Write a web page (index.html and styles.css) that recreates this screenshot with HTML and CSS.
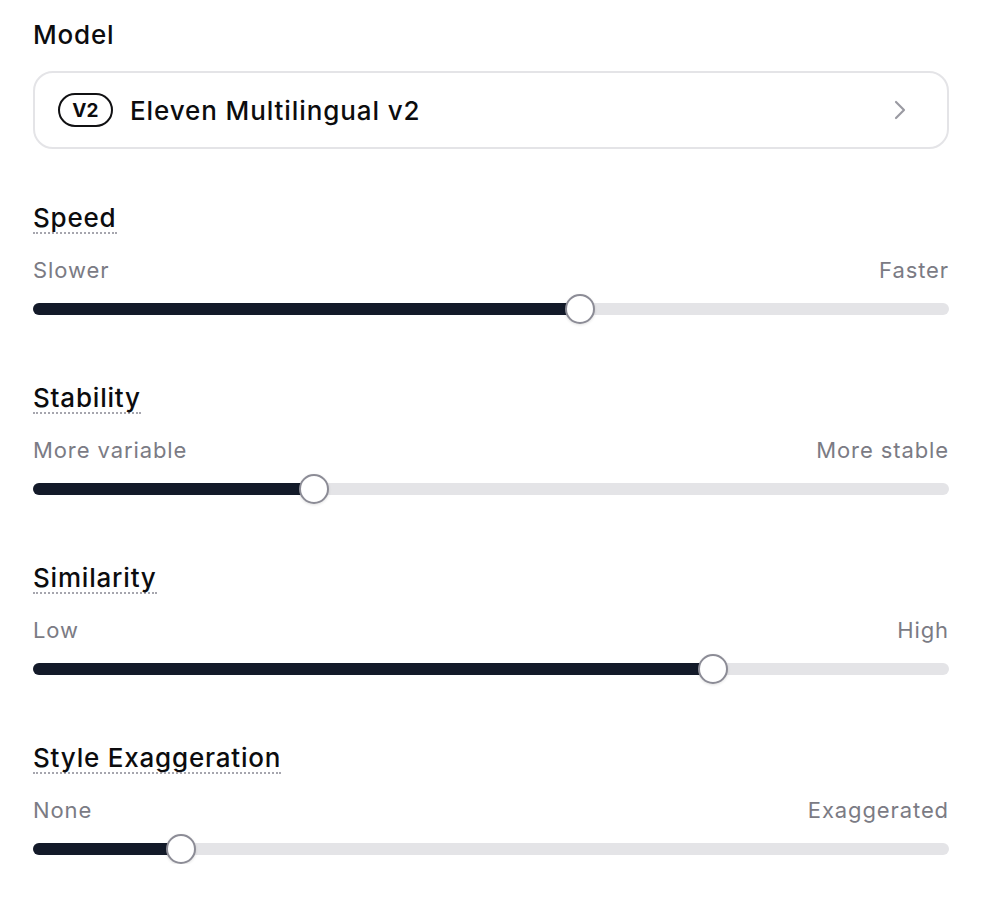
FILE: index.html
```html
<!DOCTYPE html>
<html lang="en">
<head>
<meta charset="utf-8">
<title>Voice settings</title>
<link rel="stylesheet" href="styles.css">
</head>
<body>
<main class="panel">
  <div class="field-title">Model</div>
  <button class="model-select" type="button">
    <span class="badge">V2</span>
    <span class="model-name">Eleven Multilingual v2</span>
    <svg class="chevron" viewBox="0 0 24 24" width="32" height="32" fill="none" stroke="currentColor" stroke-width="1.6" stroke-linecap="round" stroke-linejoin="round"><path d="m9 18 6-6-6-6"/></svg>
  </button>

  <section class="setting">
    <div class="label-row"><span class="label">Speed</span></div>
    <div class="ends"><span>Slower</span><span>Faster</span></div>
    <div class="slider"><div class="track"><div class="fill" style="width:calc(15px + (100% - 30px) * 0.60)"></div><div class="thumb" style="left:calc((100% - 30px) * 0.60)"></div></div></div>
  </section>

  <section class="setting">
    <div class="label-row"><span class="label">Stability</span></div>
    <div class="ends"><span>More variable</span><span>More stable</span></div>
    <div class="slider"><div class="track"><div class="fill" style="width:calc(15px + (100% - 30px) * 0.30)"></div><div class="thumb" style="left:calc((100% - 30px) * 0.30)"></div></div></div>
  </section>

  <section class="setting">
    <div class="label-row"><span class="label">Similarity</span></div>
    <div class="ends"><span>Low</span><span>High</span></div>
    <div class="slider"><div class="track"><div class="fill" style="width:calc(15px + (100% - 30px) * 0.75)"></div><div class="thumb" style="left:calc((100% - 30px) * 0.75)"></div></div></div>
  </section>

  <section class="setting">
    <div class="label-row"><span class="label">Style Exaggeration</span></div>
    <div class="ends"><span>None</span><span>Exaggerated</span></div>
    <div class="slider"><div class="track"><div class="fill" style="width:calc(15px + (100% - 30px) * 0.15)"></div><div class="thumb" style="left:calc((100% - 30px) * 0.15)"></div></div></div>
  </section>
</main>
</body>
</html>
```

FILE: styles.css
```css
html, body {
  margin: 0;
  padding: 0;
  background: #ffffff;
}

body {
  font-family: Inter, "Noto Sans", "Liberation Sans", sans-serif;
  color: #0c0c0e;
}

.panel {
  width: 916px;
  padding: 19px 0 0 33px;
  display: flex;
  flex-direction: column;
}

.field-title {
  font-size: 26px;
  line-height: 32px;
  font-weight: 500;
  letter-spacing: 0.8px;
}

.model-select {
  margin-top: 20px;
  height: 78px;
  box-sizing: border-box;
  border: 2px solid #e4e4e7;
  border-radius: 20px;
  background: #fff;
  display: flex;
  align-items: center;
  padding: 0 31px 0 23px;
  font-family: inherit;
  color: inherit;
  text-align: left;
}

.badge {
  box-sizing: border-box;
  width: 55px;
  height: 34px;
  border: 2px solid #111113;
  border-radius: 17px;
  display: flex;
  align-items: center;
  justify-content: center;
  font-size: 19px;
  font-weight: 700;
  letter-spacing: 0.2px;
}

.model-name {
  margin-left: 17px;
  font-size: 26px;
  font-weight: 500;
  letter-spacing: 0.9px;
  flex: 1;
}

.chevron {
  color: #9a9aa2;
}

.setting {
  display: flex;
  flex-direction: column;
}

.model-select + .setting {
  margin-top: 55px;
}

.setting + .setting {
  margin-top: 60px;
}

.label-row {
  display: flex;
  align-items: flex-start;
}

.label {
  font-size: 26px;
  line-height: 28px;
  font-weight: 500;
  letter-spacing: 0.8px;
  border-bottom: 2px dotted #a6a6ae;
}

.ends {
  margin-top: 22px;
  display: flex;
  justify-content: space-between;
  font-size: 22px;
  line-height: 28px;
  letter-spacing: 0.9px;
  color: #7b7b84;
}

.slider {
  margin-top: 10px;
  padding: 9px 0;
}

.track {
  position: relative;
  height: 12px;
  border-radius: 6px;
  background: #e4e4e7;
}

.fill {
  height: 100%;
  border-radius: 6px;
  background: #131a29;
}

.thumb {
  position: absolute;
  top: -9px;
  width: 30px;
  height: 30px;
  box-sizing: border-box;
  border-radius: 50%;
  border: 2px solid #8c8c96;
  background: #ffffff;
  box-shadow: 0 1px 3px rgba(0, 0, 0, 0.12);
}
```
